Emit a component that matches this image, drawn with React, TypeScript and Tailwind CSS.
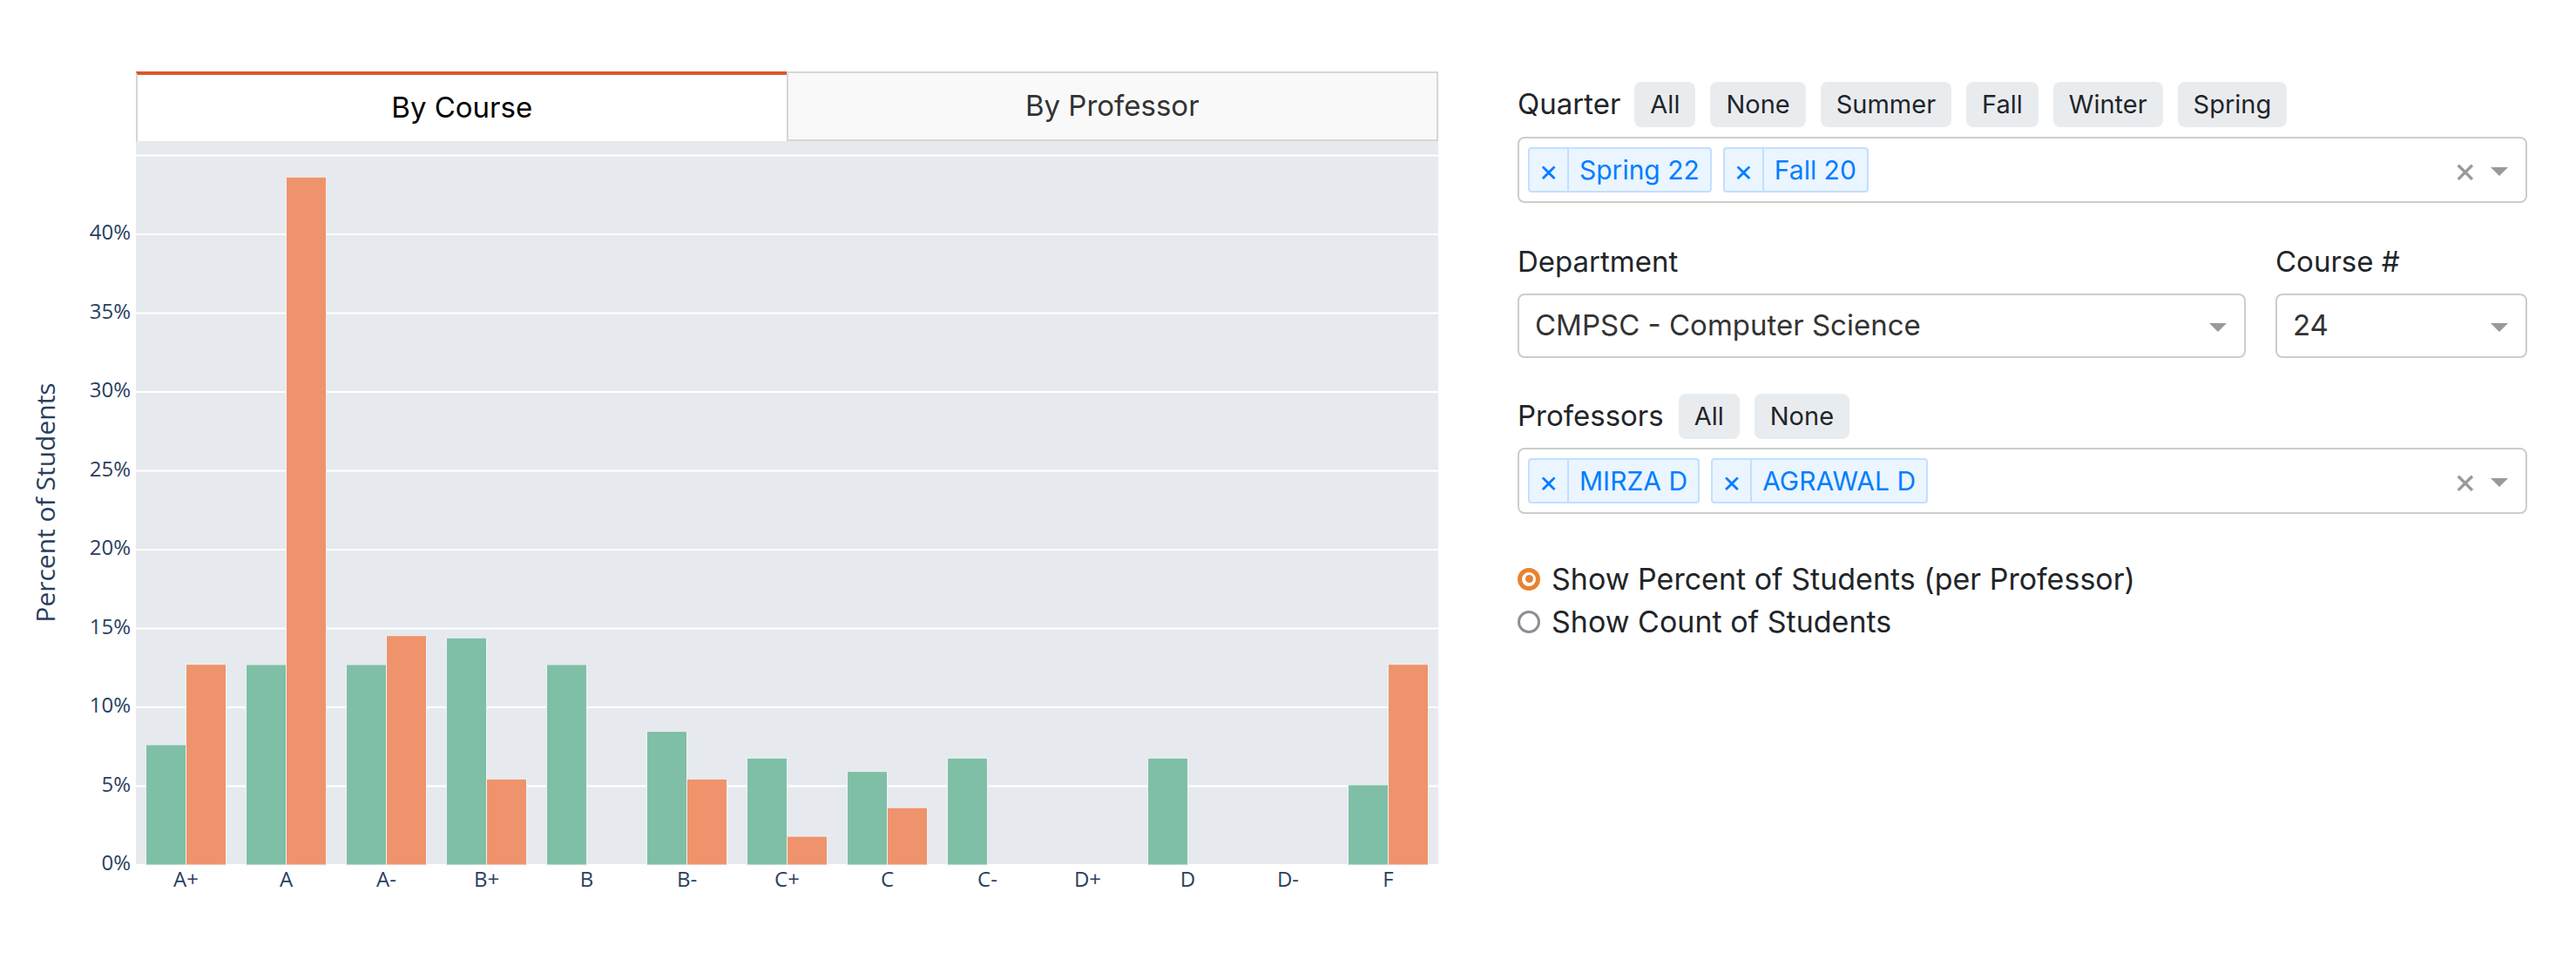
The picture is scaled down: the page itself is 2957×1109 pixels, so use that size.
import React from 'react';

const grades = ['A+', 'A', 'A-', 'B+', 'B', 'B-', 'C+', 'C', 'C-', 'D+', 'D', 'D-', 'F'];
// counts per professor
const mirza = [9, 15, 15, 17, 15, 10, 8, 7, 8, 0, 8, 0, 6];
const agrawal = [7, 24, 8, 3, 0, 3, 1, 2, 0, 0, 0, 0, 7];

const total = (xs: number[]) => xs.reduce((a, b) => a + b, 0);

function GradeChart() {
  const left = 156;
  const right = 1651;
  const bottom = 831;
  const perPct = 18.1;
  const catW = (right - left) / grades.length;
  const barW = catW * 0.4;
  const mTot = total(mirza);
  const aTot = total(agrawal);
  const ticks = [0, 5, 10, 15, 20, 25, 30, 35, 40];
  const font = '"Open Sans", verdana, arial, sans-serif';

  return (
    <svg width={1700} height={900} className="block">
      <rect x={left} y={0} width={right - left} height={bottom} fill="#e6eaee" />
      {[...ticks, 45].map((t) => (
        <line
          key={t}
          x1={left}
          x2={right}
          y1={bottom - t * perPct}
          y2={bottom - t * perPct}
          stroke="#ffffff"
          strokeWidth={2}
        />
      ))}
      {grades.map((g, i) => {
        const cx = left + catW * (i + 0.5);
        const m = (mirza[i] / mTot) * 100 * perPct;
        const a = (agrawal[i] / aTot) * 100 * perPct;
        return (
          <g key={g}>
            <rect x={cx - barW} y={bottom - m} width={barW} height={m} fill="#7fbfa6" stroke="#eef2f4" strokeWidth={1} />
            <rect x={cx} y={bottom - a} width={barW} height={a} fill="#ef936c" stroke="#eef2f4" strokeWidth={1} />
            <text x={cx} y={850} textAnchor="middle" dominantBaseline="middle" fontSize={24} fill="#2a3f5f" fontFamily={font}>
              {g}
            </text>
          </g>
        );
      })}
      {ticks.map((t) => (
        <text
          key={t}
          x={150}
          y={bottom - t * perPct}
          textAnchor="end"
          dominantBaseline="middle"
          fontSize={24}
          fill="#2a3f5f"
          fontFamily={font}
        >
          {t}%
        </text>
      ))}
      <text
        x={55}
        y={415}
        transform="rotate(-90 55 415)"
        textAnchor="middle"
        dominantBaseline="middle"
        fontSize={30}
        fill="#2a3f5f"
        fontFamily={font}
      >
        Percent of Students
      </text>
    </svg>
  );
}

function Tabs() {
  return (
    <div className="flex ml-[156px] w-[1495px] h-[80px] text-[33px]">
      <div className="flex-1 flex items-center justify-center bg-white border-t-[4px] border-t-[#d9592c] border-l-2 border-l-[#d6d6d6] text-black">
        By Course
      </div>
      <div className="flex-1 flex items-center justify-center bg-[#f9f9f9] border-2 border-[#d6d6d6] text-[#333]">
        By Professor
      </div>
    </div>
  );
}

function Btn({ label }: { label: string }) {
  return (
    <button className="h-[52px] px-[18px] rounded-[8px] bg-[#e9ecef] text-[29px] text-[#212529]">{label}</button>
  );
}

function Arrow() {
  return <span className="w-0 h-0 border-t-[10px] border-t-[#999] border-x-[10px] border-x-transparent mt-[4px]" />;
}

function Chip({ label }: { label: string }) {
  return (
    <div className="flex h-[52px] items-stretch rounded-[4px] border-2 border-[#c2dfff] bg-[#ebf5ff] text-[#007eff] text-[30px]">
      <span className="w-[45px] flex items-center justify-center border-r-2 border-r-[#c2dfff] text-[34px]">×</span>
      <span className="px-[12px] flex items-center">{label}</span>
    </div>
  );
}

function MultiSelect({ values }: { values: string[] }) {
  return (
    <div className="flex items-center h-[76px] border-2 border-[#ccc] rounded-[8px] pl-[10px] pr-[20px]">
      <div className="flex gap-[13px] flex-1">
        {values.map((v) => (
          <Chip key={v} label={v} />
        ))}
      </div>
      <span className="text-[40px] text-[#999] leading-none mr-[16px]">×</span>
      <Arrow />
    </div>
  );
}

function Select({ value, className }: { value: string; className: string }) {
  return (
    <div className={`flex items-center h-[74px] border-2 border-[#ccc] rounded-[8px] pl-[18px] pr-[20px] text-[33px] text-[#333] ${className}`}>
      <span className="flex-1">{value}</span>
      <Arrow />
    </div>
  );
}

function Radio({ checked, label }: { checked: boolean; label: string }) {
  return (
    <label className="flex items-center h-[49px] gap-[13px]">
      {checked ? (
        <span className="w-[26px] h-[26px] rounded-full border-[5px] border-[#e8822f] flex items-center justify-center">
          <span className="w-[9px] h-[9px] rounded-full bg-[#e8822f]" />
        </span>
      ) : (
        <span className="w-[26px] h-[26px] rounded-full border-[3px] border-[#8f8d98]" />
      )}
      <span className="text-[34px] text-[#212529]">{label}</span>
    </label>
  );
}

export default function App() {
  return (
    <div className="flex w-[2957px] h-[1109px] bg-white" style={{ fontFamily: 'Inter, "Noto Sans", sans-serif' }}>
      <div className="w-[1700px] pt-[82px] flex flex-col">
        <Tabs />
        <GradeChart />
      </div>
      <div className="w-[1159px] ml-[42px] pt-[94px] flex flex-col">
        <div className="flex items-center h-[52px] gap-[17px]">
          <span className="text-[33px] text-[#212529] mr-[-1px]">Quarter</span>
          {['All', 'None', 'Summer', 'Fall', 'Winter', 'Spring'].map((b) => (
            <Btn key={b} label={b} />
          ))}
        </div>
        <div className="mt-[11px]">
          <MultiSelect values={['Spring 22', 'Fall 20']} />
        </div>
        <div className="flex gap-[34px] mt-[44px]">
          <div className="flex flex-col w-[836px]">
            <span className="h-[48px] flex items-center text-[33px] text-[#212529]">Department</span>
            <Select value="CMPSC - Computer Science" className="mt-[12px]" />
          </div>
          <div className="flex flex-col w-[289px]">
            <span className="h-[48px] flex items-center text-[33px] text-[#212529]">Course #</span>
            <Select value="24" className="mt-[12px]" />
          </div>
        </div>
        <div className="flex items-center h-[52px] gap-[17px] mt-[41px]">
          <span className="text-[33px] text-[#212529]">Professors</span>
          <Btn label="All" />
          <Btn label="None" />
        </div>
        <div className="mt-[10px]">
          <MultiSelect values={['MIRZA D', 'AGRAWAL D']} />
        </div>
        <div className="mt-[50px] flex flex-col">
          <Radio checked label="Show Percent of Students (per Professor)" />
          <Radio checked={false} label="Show Count of Students" />
        </div>
      </div>
    </div>
  );
}
